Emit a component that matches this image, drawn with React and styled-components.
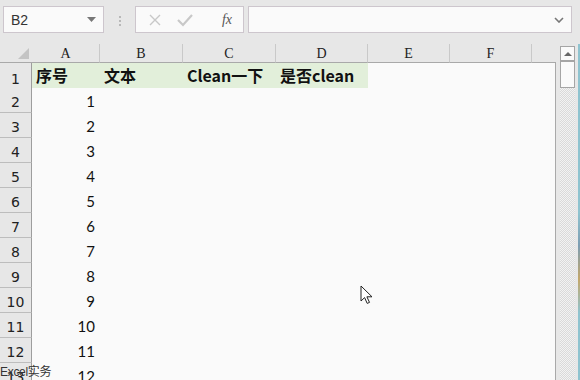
import React from 'react';
import styled, { createGlobalStyle } from 'styled-components';

const GlobalStyle = createGlobalStyle`
    html, body {
        margin: 0;
        padding: 0;
        background: #e7e7e7;
    }
`

const COLS = [
    { key: 'A', width: 68 },
    { key: 'B', width: 83 },
    { key: 'C', width: 93 },
    { key: 'D', width: 92 },
    { key: 'E', width: 82 },
    { key: 'F', width: 82 },
    { key: '', width: 24 },
];

const gridTemplate = `32px ${COLS.map((c) => `${c.width}px`).join(' ')}`;

const StyledWindow = styled.div`
    position: relative;
    width: 580px;
    height: 380px;
    overflow: hidden;
    background: #e7e7e7;
    font-family: "Liberation Sans", Arial, sans-serif;
`

const StyledToolbar = styled.div`
    height: 44px;
    display: flex;
    align-items: flex-start;
    padding: 6px 8px 0 3px;
    box-sizing: border-box;
`

const StyledBox = styled.div`
    height: 27px;
    box-sizing: border-box;
    background: #fafafa;
    border: 1px solid #cdc6cd;
    display: flex;
    align-items: center;
    width: ${(p) => p.$width}px;
    flex: ${(p) => (p.$grow ? 1 : 'none')};
    padding: 0 7px;
    gap: ${(p) => p.$gap || 0}px;
`

const StyledNameText = styled.span`
    flex: 1;
    font-size: 14px;
    color: #333;
`

const StyledDots = styled.div`
    width: 31px;
    display: flex;
    flex-direction: column;
    align-items: center;
    gap: 2px;
    padding-top: 10px;
    & > i {
        width: 2px;
        height: 2px;
        background: #b8b8b8;
    }
`

const StyledFx = styled.span`
    font-family: "Liberation Serif", "Times New Roman", serif;
    font-style: italic;
    font-size: 14px;
    color: #555;
    margin-left: auto;
    margin-right: 4px;
`

const StyledSheet = styled.div`
    display: flex;
    height: 336px;
`

const StyledGrid = styled.div`
    width: 557px;
    display: flex;
    flex-direction: column;
`

const StyledRow = styled.div`
    display: grid;
    grid-template-columns: ${gridTemplate};
    height: ${(p) => p.$height}px;
    flex: none;
`

const StyledCorner = styled.div`
    position: relative;
    border-bottom: 1px solid #a9a9a9;
    box-sizing: border-box;
    &::after {
        content: '';
        position: absolute;
        right: 3px;
        bottom: 3px;
        border-left: 11px solid transparent;
        border-bottom: 11px solid #c4c4c4;
    }
`

const StyledColHeader = styled.div`
    display: flex;
    align-items: flex-end;
    justify-content: center;
    padding-bottom: 1px;
    box-sizing: border-box;
    font-family: "Liberation Serif", "Times New Roman", serif;
    font-size: 14px;
    line-height: 14px;
    color: #222;
    border-bottom: 1px solid #a9a9a9;
    border-right: ${(p) => (p.$last ? 'none' : '1px solid #c9c9c9')};
`

const StyledRowHeader = styled.div`
    display: flex;
    align-items: flex-end;
    justify-content: center;
    padding-bottom: 3px;
    box-sizing: border-box;
    font-family: "DejaVu Sans", sans-serif;
    font-size: 14px;
    line-height: 14px;
    color: #222;
    background: #e7e7e7;
    border-right: 1px solid #9d9d9d;
    border-bottom: 1px solid #bdbdbd;
`

const StyledCell = styled.div`
    display: flex;
    align-items: ${(p) => (p.$head ? 'flex-end' : 'center')};
    justify-content: ${(p) => (p.$align === 'right' ? 'flex-end' : 'flex-start')};
    padding: ${(p) => (p.$head ? '0 0 2px 4px' : '0 5px 0 4px')};
    box-sizing: border-box;
    white-space: nowrap;
    overflow: visible;
    background: ${(p) => (p.$fill ? '#e2efda' : '#fafafa')};
    border-bottom: ${(p) => (p.$underline ? '1px solid #111' : 'none')};
    border-right: ${(p) => (p.$edge ? '1px solid #a9a9a9' : 'none')};
    font-family: ${(p) => (p.$head ? '"Noto Sans CJK SC", "Noto Sans", sans-serif' : 'Lato, "Open Sans", sans-serif')};
    font-weight: ${(p) => (p.$head ? 700 : 400)};
    font-size: ${(p) => (p.$head ? 16 : 15)}px;
    color: #111;
`

const StyledScrollGap = styled.div`
    width: 3px;
`

const StyledScrollbar = styled.div`
    width: 15px;
    margin-top: 2px;
    display: flex;
    flex-direction: column;
    background: repeating-conic-gradient(#dadada 0 25%, #f3f3f3 0 50%) 0 0 / 2px 2px;
`

const StyledScrollButton = styled.div`
    height: ${(p) => p.$height}px;
    box-sizing: border-box;
    border: 1px solid #a5a5a5;
    background: #fafafa;
    display: flex;
    align-items: center;
    justify-content: center;
    & > i {
        border-left: 4px solid transparent;
        border-right: 4px solid transparent;
        border-bottom: 4px solid #666;
    }
`

const StyledEdge = styled.div`
    margin-left: 3px;
    width: 2px;
    background: linear-gradient(#8fc3cf, #8fc3cf 50%, #7d9db2 60%, #c3a76a 70%, #8fc3cf 80%);
`

const StyledWatermark = styled.span`
    position: absolute;
    left: 0;
    bottom: 1px;
    font-family: "Liberation Sans", "Noto Sans CJK SC", sans-serif;
    font-size: 12px;
    color: #333;
    letter-spacing: -0.3px;
`

const StyledPointer = styled.svg`
    position: absolute;
    left: 360px;
    top: 285px;
`

const headRow = ['序号', '文本', 'Clean一下', '是否clean', '', '', ''];

const App = () => {
    const dataRows = Array.from({ length: 12 }, (_, i) => i + 1);

    return (
        <StyledWindow>
            <GlobalStyle />
            <StyledToolbar>
                <StyledBox $width={101}>
                    <StyledNameText>B2</StyledNameText>
                    <svg width="9" height="5" viewBox="0 0 9 5"><path d="M0 0h9L4.5 5z" fill="#777" /></svg>
                </StyledBox>
                <StyledDots><i /><i /><i /></StyledDots>
                <StyledBox $width={109} $gap={15}>
                    <svg width="14" height="14" viewBox="0 0 14 14" style={{ marginLeft: 5 }}>
                        <path d="M2 2l10 10M12 2L2 12" stroke="#c8c8c8" strokeWidth="1.4" />
                    </svg>
                    <svg width="16" height="14" viewBox="0 0 16 14">
                        <path d="M1 7l5 5L15 2" stroke="#c8c8c8" strokeWidth="2.2" fill="none" />
                    </svg>
                    <StyledFx>fx</StyledFx>
                </StyledBox>
                <div style={{ width: 4 }} />
                <StyledBox $grow>
                    <span style={{ flex: 1 }} />
                    <svg width="10" height="6" viewBox="0 0 10 6">
                        <path d="M1 1l4 4 4-4" stroke="#777" strokeWidth="1.6" fill="none" />
                    </svg>
                </StyledBox>
            </StyledToolbar>
            <StyledSheet>
                <StyledGrid>
                    <StyledRow $height={19}>
                        <StyledCorner />
                        {COLS.map((c, i) => (
                            <StyledColHeader key={i} $last={i === COLS.length - 1}>{c.key}</StyledColHeader>
                        ))}
                    </StyledRow>
                    <StyledRow $height={25}>
                        <StyledRowHeader>1</StyledRowHeader>
                        {headRow.map((text, i) => (
                            <StyledCell key={i} $head $fill={i < 4} $underline={i < 4} $edge={i === COLS.length - 1}>{text}</StyledCell>
                        ))}
                    </StyledRow>
                    {dataRows.map((n) => (
                        <StyledRow $height={25} key={n}>
                            <StyledRowHeader>{n + 1}</StyledRowHeader>
                            {COLS.map((c, i) => (
                                <StyledCell key={i} $align={i === 0 ? 'right' : 'left'} $edge={i === COLS.length - 1}>
                                    {i === 0 ? n : ''}
                                </StyledCell>
                            ))}
                        </StyledRow>
                    ))}
                </StyledGrid>
                <StyledScrollGap />
                <StyledScrollbar>
                    <StyledScrollButton $height={15}><i /></StyledScrollButton>
                    <StyledScrollButton $height={27} />
                </StyledScrollbar>
                <StyledEdge />
            </StyledSheet>
            <StyledWatermark>Excel实务</StyledWatermark>
            <StyledPointer width="13" height="20" viewBox="0 0 13 20">
                <path d="M1 1v15l3.6-3.4 2.6 5.8 2.3-1-2.6-5.6H12z" fill="#fff" stroke="#222" strokeWidth="1" strokeLinejoin="round" />
            </StyledPointer>
        </StyledWindow>
    );
};

export default App;
